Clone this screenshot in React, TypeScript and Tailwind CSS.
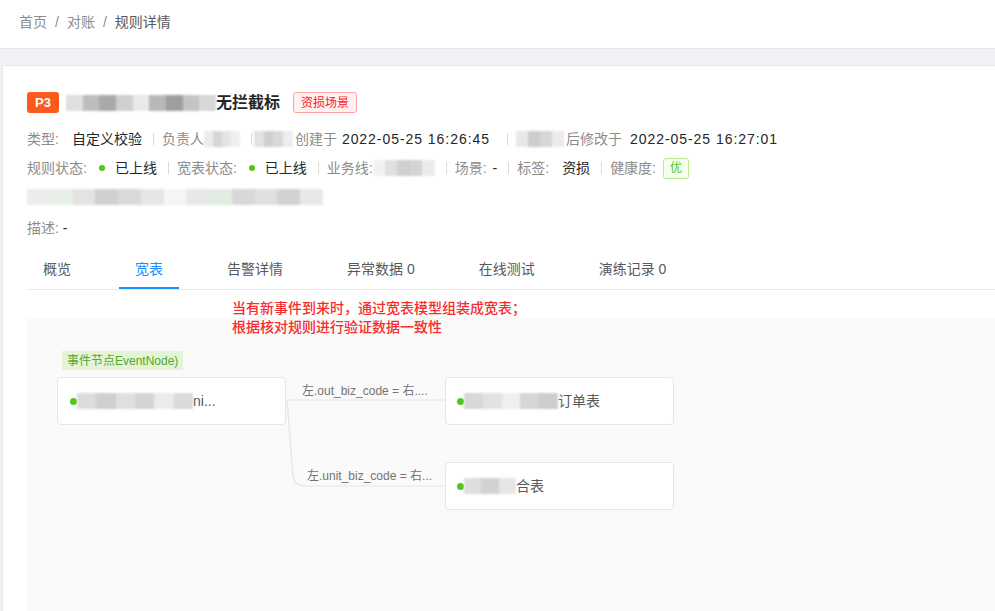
import type { JSX } from 'react'

const FONT = { fontFamily: '"Liberation Sans", "Noto Sans CJK SC", sans-serif' }

// Masked text in the screenshot: a smudge of grey cells.
const Blur = ({ w, tones }: { w: number; tones: string[] }): JSX.Element => (
  <span className="inline-flex h-[16px] overflow-hidden align-middle blur-[1.2px]" style={{ width: w }}>
    {tones.map((t, i) => (
      <span key={i} className="h-full flex-1" style={{ background: t }} />
    ))}
  </span>
)

const Sep = (): JSX.Element => <span className="ml-[11px] mr-[8px] inline-block h-[12px] w-px bg-[#d9d9d9]" />

const Dot = (): JSX.Element => <span className="ml-[12px] mr-[10px] inline-block h-[6px] w-[6px] rounded-full bg-[#52c41a]" />

const TABS = ['概览', '宽表', '告警详情', '异常数据 0', '在线测试', '演练记录 0']

const App = (): JSX.Element => {
  return (
    <div className="h-[611px] w-[995px] overflow-hidden bg-[#f0f2f5] text-[14px]" style={FONT}>
      {/* breadcrumb */}
      <div className="flex h-[49px] items-center border-b border-[#e8e8e8] bg-white pl-[19px] pb-[4px] text-[14px] leading-[22px] text-[#8c8c8c]">
        <span>首页</span>
        <span className="mx-[8px]">/</span>
        <span>对账</span>
        <span className="mx-[8px]">/</span>
        <span className="text-[#595959]">规则详情</span>
      </div>

      <div className="ml-[2px] mt-[16px] border-l border-t border-[#e8e8e8] bg-white pl-[24px] pt-[26px]">
        {/* title */}
        <div className="flex h-[21px] items-center">
          <span className="flex h-[21px] w-[32px] items-center justify-center rounded-[3px] bg-[#fa5a1c] text-[13px] font-bold text-white">P3</span>
          <span className="ml-[7px] flex items-center text-[16px] font-semibold text-[#262626]">
            <Blur w={150} tones={['#e0e0e0', '#bdbdbd', '#a9a9a9', '#cfcfcf', '#e9e9e9', '#b8b8b8', '#9e9e9e', '#c4c4c4', '#d8d8d8']} />
            <span>无拦截标</span>
          </span>
          <span className="ml-[13px] flex h-[21px] items-center rounded-[3px] border border-[#ffa39e] bg-[#fff1f0] px-[7px] text-[12px] text-[#f5222d]">资损场景</span>
        </div>

        {/* meta row 1 */}
        <div className="mt-[15px] flex h-[22px] items-center leading-[22px] text-[#8c8c8c]">
          <span>类型:</span>
          <span className="ml-[13px] text-[#262626]">自定义校验</span>
          <Sep />
          <span>负责人</span>
          <Blur w={36} tones={['#ececec', '#d6d6d6', '#e4e4e4', '#f0f0f0']} />
          <span className="ml-[11px] mr-[2px] inline-block h-[12px] w-px bg-[#d9d9d9]" />
          <Blur w={39} tones={['#e2e2e2', '#cfcfcf', '#d9d9d9', '#ededed']} />
          <span className="ml-[2px]">创建于</span>
          <span className="ml-[5px] tracking-[0.95px] text-[#262626]">2022-05-25 16:26:45</span>
          <span className="ml-[17px] mr-[8px] inline-block h-[12px] w-px bg-[#d9d9d9]" />
          <Blur w={48} tones={['#e8e8e8', '#cdcdcd', '#d6d6d6', '#ebebeb']} />
          <span className="ml-[2px]">后修改于</span>
          <span className="ml-[8px] tracking-[0.95px] text-[#262626]">2022-05-25 16:27:01</span>
        </div>

        {/* meta row 2 */}
        <div className="mt-[7px] flex h-[22px] items-center leading-[22px] text-[#8c8c8c]">
          <span>规则状态:</span>
          <Dot />
          <span className="text-[#262626]">已上线</span>
          <Sep />
          <span>宽表状态:</span>
          <Dot />
          <span className="text-[#262626]">已上线</span>
          <Sep />
          <span>业务线:</span>
          <Blur w={62} tones={['#f2f2f2', '#e0e0e0', '#cfcfcf', '#d4d4d4', '#ececec']} />
          <Sep />
          <span>场景:</span>
          <span className="ml-[6px] text-[#262626]">-</span>
          <Sep />
          <span>标签:</span>
          <span className="ml-[13px] text-[#262626]">资损</span>
          <Sep />
          <span>健康度:</span>
          <span className="ml-[7px] flex h-[21px] items-center rounded-[3px] border border-[#b7eb8f] bg-[#f6ffed] px-[6px] text-[12px] text-[#52c41a]">优</span>
        </div>

        {/* masked row */}
        <div className="mt-[7px] flex h-[22px] items-center">
          <Blur
            w={296}
            tones={['#ececec', '#e6f0e6', '#e3e3e3', '#d0d0d0', '#d9d9d9', '#e6e6e6', '#f5f5f5', '#e8e8e8', '#e2ede2', '#d8d8d8', '#e0e0e0', '#d2d2d2', '#e8e8e8']}
          />
        </div>

        <div className="mt-[9px] h-[22px] leading-[22px] text-[#8c8c8c]">
          描述: <span className="text-[#262626]">-</span>
        </div>

        {/* tabs */}
        <div className="mt-[9px] flex border-b border-[#e8e8e8]">
          {TABS.map((t, i) => (
            <div
              key={t}
              className={
                i === 1
                  ? 'mr-[32px] border-b-2 border-[#1890ff] px-[16px] pt-[10px] pb-[7px] leading-[22px] text-[#1890ff]'
                  : 'mr-[32px] border-b-2 border-transparent px-[16px] pt-[10px] pb-[7px] leading-[22px] text-[#595959]'
              }
            >
              {t}
            </div>
          ))}
        </div>

        {/* wide table canvas */}
        <div className="relative mt-[28px] h-[300px] bg-[#fafafa]">
          <div className="absolute left-[205px] top-[-19px] text-[14px] font-medium leading-[19px] text-[#f52d2d]">
            <div>当有新事件到来时，通过宽表模型组装成宽表；</div>
            <div>根据核对规则进行验证数据一致性</div>
          </div>

          <svg className="absolute left-0 top-0" width="700" height="300" fill="none">
            <path d="M259 82 H418" stroke="#e4e4e4" strokeWidth="1.2" />
            <path d="M260 82 L266 158 Q267 168 278 168 H418" stroke="#e4e4e4" strokeWidth="1.2" />
          </svg>

          <div className="absolute left-[35px] top-[33px] flex h-[19px] items-center bg-[#e3f5d6] px-[5px] text-[12px] text-[#52a82e]">事件节点EventNode)</div>

          <div className="absolute left-[30px] top-[59px] flex h-[48px] w-[229px] items-center rounded-[4px] border border-[#e6e6e6] bg-white pl-[12px] text-[14px] text-[#595959]">
            <span className="h-[7px] w-[7px] rounded-full bg-[#52c41a]" />
            <Blur w={116} tones={['#dcdcdc', '#cfcfcf', '#e0e0e0', '#d4d4d4', '#ebebeb', '#dadada']} />
            <span>ni...</span>
          </div>

          <span className="absolute left-[275px] top-[64px] text-[12px] leading-[18px] text-[#737373]">左.out_biz_code = 右....</span>
          <span className="absolute left-[280px] top-[149px] text-[12px] leading-[18px] text-[#737373]">左.unit_biz_code = 右...</span>

          <div className="absolute left-[418px] top-[59px] flex h-[48px] w-[229px] items-center rounded-[4px] border border-[#e6e6e6] bg-white pl-[11px] text-[14px] text-[#595959]">
            <span className="h-[7px] w-[7px] rounded-full bg-[#52c41a]" />
            <Blur w={94} tones={['#d8d8d8', '#e2e2e2', '#efefef', '#d6d6d6', '#cdcdcd']} />
            <span>订单表</span>
          </div>

          <div className="absolute left-[418px] top-[144px] flex h-[48px] w-[229px] items-center rounded-[4px] border border-[#e6e6e6] bg-white pl-[11px] text-[14px] text-[#595959]">
            <span className="h-[7px] w-[7px] rounded-full bg-[#52c41a]" />
            <Blur w={52} tones={['#dedede', '#d2d2d2', '#e6e6e6']} />
            <span>合表</span>
          </div>
        </div>
      </div>
    </div>
  )
}

export default App
